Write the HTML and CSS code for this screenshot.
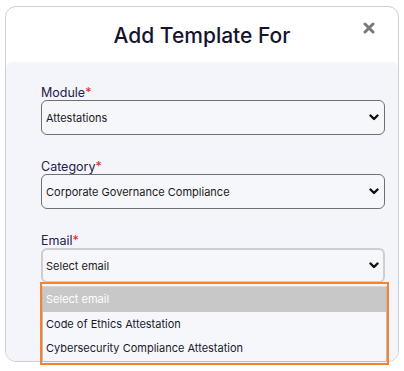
FILE: index.html
```html
<!DOCTYPE html>
<html>
<head>
<meta charset="utf-8">
<link rel="stylesheet" href="styles.css">
</head>
<body>
<div class="modal">
  <div class="header">
    <h1 class="title">Add Template For</h1>
    <span class="close" aria-label="close">
      <svg width="12" height="12" viewBox="0 0 12 12"><path d="M2 2L10 10M10 2L2 10" stroke="#7a7a7a" stroke-width="3" stroke-linecap="round"/></svg>
    </span>
  </div>
  <div class="content">
    <div class="field">
      <div class="label">Module<span class="req">*</span></div>
      <div class="select"><span>Attestations</span>
        <svg class="chev" width="10" height="7" viewBox="0 0 10 7"><path d="M1.5 1.5L5 5L8.5 1.5" fill="none" stroke="#111" stroke-width="2.4" stroke-linecap="round" stroke-linejoin="round"/></svg>
      </div>
    </div>
    <div class="field">
      <div class="label">Category<span class="req">*</span></div>
      <div class="select"><span>Corporate Governance Compliance</span>
        <svg class="chev" width="10" height="7" viewBox="0 0 10 7"><path d="M1.5 1.5L5 5L8.5 1.5" fill="none" stroke="#111" stroke-width="2.4" stroke-linecap="round" stroke-linejoin="round"/></svg>
      </div>
    </div>
    <div class="field">
      <div class="label">Email<span class="req">*</span></div>
      <div class="select focused"><span>Select email</span>
        <svg class="chev" width="10" height="7" viewBox="0 0 10 7"><path d="M1.5 1.5L5 5L8.5 1.5" fill="none" stroke="#111" stroke-width="2.4" stroke-linecap="round" stroke-linejoin="round"/></svg>
      </div>
    </div>
  </div>
</div>
<div class="dropdown">
  <div class="list">
    <div class="opt selected">Select email</div>
    <div class="opt">Code of Ethics Attestation</div>
    <div class="opt">Cybersecurity Compliance Attestation</div>
  </div>
</div>
</body>
</html>
```
FILE: styles.css
```css
* { box-sizing: border-box; }
html, body { margin: 0; padding: 0; background: #ffffff; }
body { font-family: Inter, "Noto Sans", sans-serif; width: 404px; height: 371px; overflow: hidden; position: relative; }

.modal {
  margin: 6px 0 0 5px;
  width: 394px;
  height: 356px;
  border: 1px solid #cfcfd4;
  border-radius: 11px;
  background: #ffffff;
  overflow: hidden;
  display: flex;
  flex-direction: column;
}
.header {
  height: 55px;
  flex: none;
  position: relative;
  display: flex;
  align-items: center;
  justify-content: center;
}
.title {
  margin: 0;
  font-size: 21px;
  font-weight: 500;
  color: #14142e;
  letter-spacing: 0;
  padding-top: 2px;
}
.close {
  position: absolute;
  right: 23px;
  top: 15px;
  width: 12px;
  height: 12px;
  display: block;
}
.close svg { display: block; }

.content {
  flex: 1;
  background: #f4f5fa;
  border-radius: 6px 6px 0 0;
  padding: 23px 13px 0 35px;
  display: flex;
  flex-direction: column;
  gap: 24px;
}
.field { display: flex; flex-direction: column; }
.label {
  font-size: 12.5px;
  line-height: 15px;
  height: 15px;
  color: #25204a;
}
.req { color: #e52222; }
.select {
  height: 35px;
  border: 1px solid #707070;
  border-radius: 6px;
  background: #f6f7fb;
  display: flex;
  align-items: center;
  justify-content: space-between;
  padding: 0 5px 0 4px;
  font-size: 11px;
  color: #1a1a1a;
}
.select.focused {
  border: 2px solid #cdcdd2;
  padding: 0 4px 0 3px;
}
.chev { display: block; }

.dropdown {
  position: absolute;
  left: 40px;
  top: 282px;
  width: 349px;
  height: 83px;
  border: 2px solid #f5822c;
  background: #f4f5fa;
  padding: 2px 0 0 0;
}
.list {
  border: 1px solid #bdbdbd;
  border-top: 1px solid #d8d8d8;
  background: #f6f7fb;
  height: 76px;
}
.opt {
  height: 24.6px;
  display: flex;
  align-items: center;
  padding-left: 3px;
  font-size: 11px;
  color: #1a1a2e;
}
.opt.selected {
  background: #c8c8c8;
  color: #ffffff;
}
```
